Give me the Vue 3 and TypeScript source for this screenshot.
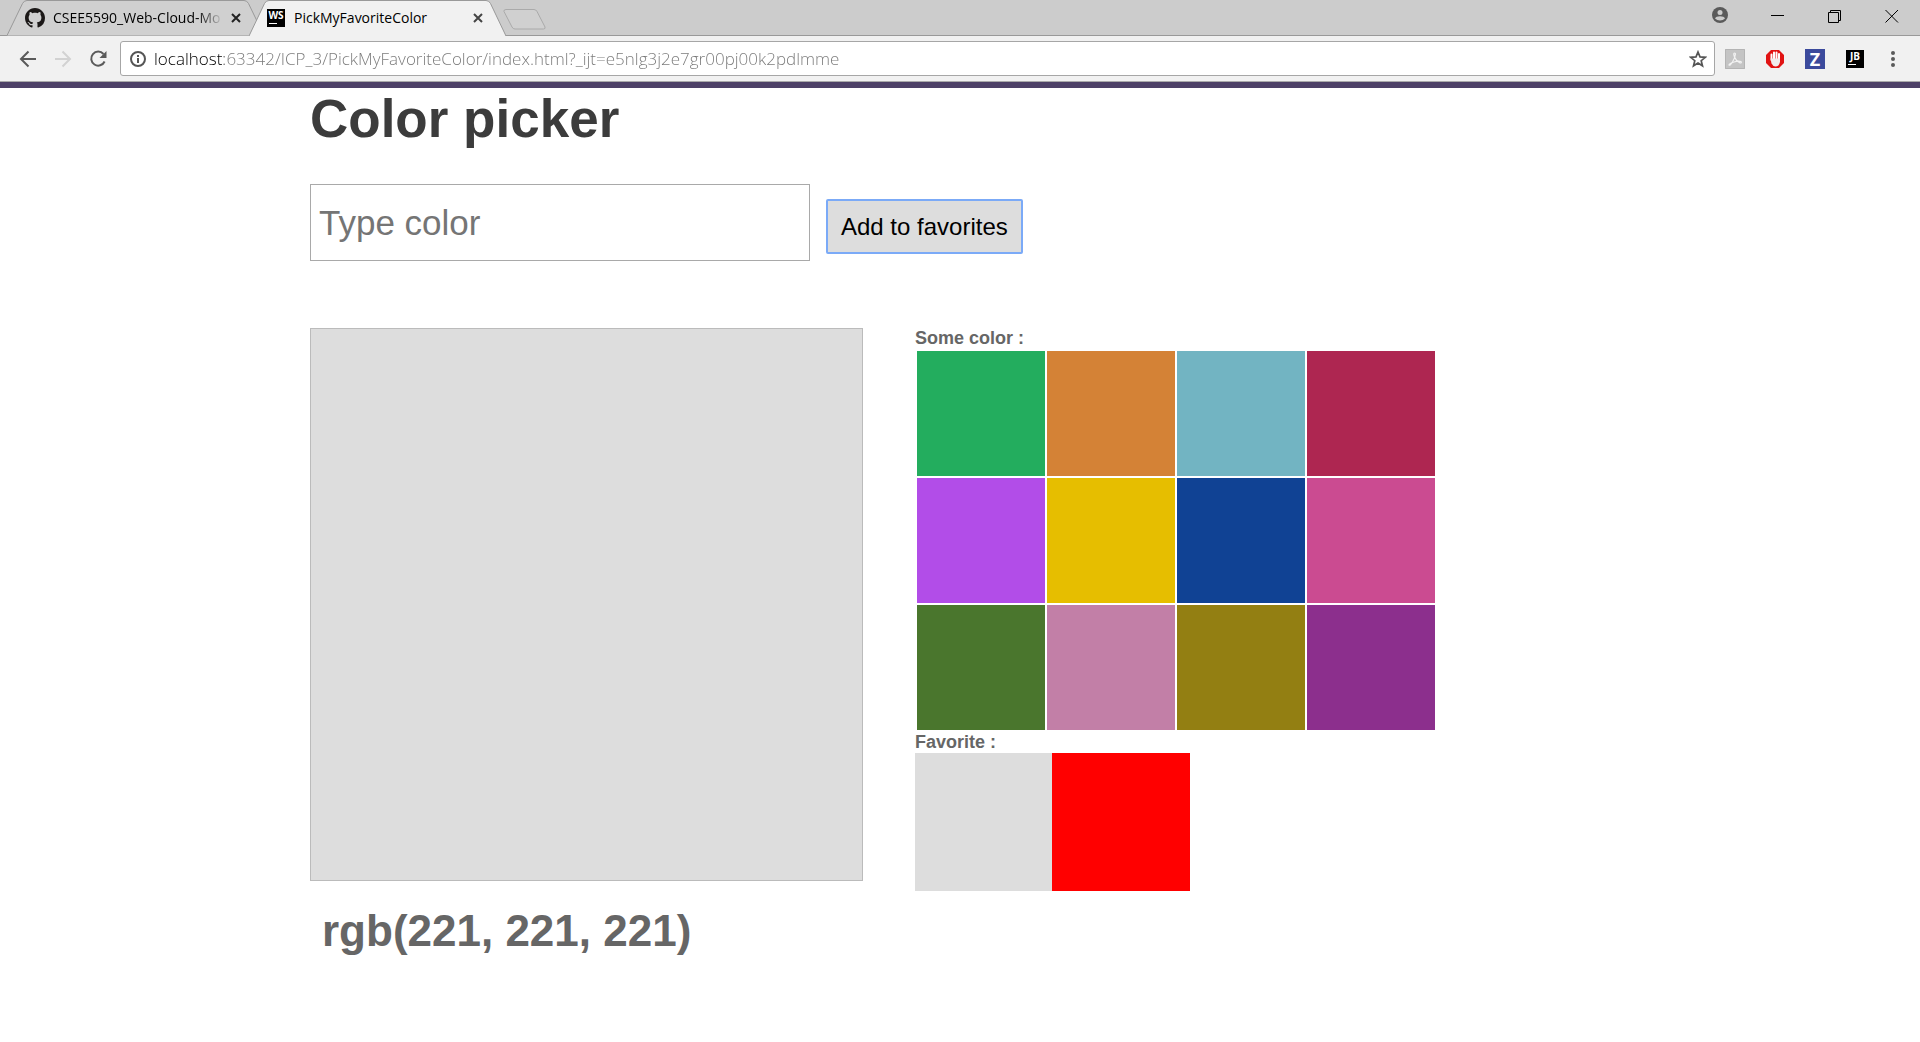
<script setup lang="ts">
import { computed, ref } from 'vue'

const palette: string[] = [
  '#23ad5e', '#d48236', '#72b4c2', '#ae2651',
  '#b24de8', '#e6be00', '#104294', '#cb4b91',
  '#4a762d', '#c27fa7', '#937f12', '#8c2f8d',
]

const address = ref('localhost:63342/ICP_3/PickMyFavoriteColor/index.html?_ijt=e5nlg3j2e7gr00pj00k2pdlmme')
const typed = ref('')
const current = ref('#dddddd')
const favorites = ref<string[]>(['#dddddd', '#ff0000'])

const rgbText = computed(() => {
  const hex = current.value.slice(1)
  const parts = [0, 2, 4].map((i) => parseInt(hex.slice(i, i + 2), 16))
  return `rgb(${parts.join(', ')})`
})

function applyTyped(): void {
  if (/^#[0-9a-f]{6}$/i.test(typed.value)) current.value = typed.value
}

function addFavorite(): void {
  favorites.value.unshift(current.value)
}
</script>

<template>
  <div class="window">
    <header class="browser">
      <div class="strip">
        <div class="tab tab-back">
          <svg class="shape" viewBox="0 0 258 36" aria-hidden="true">
            <path d="M0 35.500L15.500 3.500Q17 .500 20 .500H237Q240 .500 241.500 3.500L257 35.500" fill="#d0d0d0" stroke="#999" />
          </svg>
          <svg class="favicon" viewBox="0 0 16 16" aria-hidden="true">
            <path fill="#1b1817" d="M8 0C3.580 0 0 3.580 0 8c0 3.540 2.290 6.530 5.470 7.590.4.070.55-.17.55-.38 0-.19-.01-.82-.01-1.490-2.010.37-2.530-.49-2.690-.94-.09-.23-.48-.94-.82-1.130-.28-.15-.68-.52-.01-.53.63-.01 1.080.58 1.230.82.72 1.210 1.870.87 2.330.66.07-.52.28-.87.51-1.070-1.780-.2-3.640-.89-3.640-3.950 0-.87.31-1.590.82-2.150-.08-.2-.36-1.020.08-2.120 0 0 .67-.21 2.200.82.64-.18 1.320-.27 2-.27s1.360.09 2 .27c1.530-1.040 2.200-.82 2.200-.82.44 1.100.16 1.920.08 2.120.51.56.82 1.270.82 2.150 0 3.070-1.870 3.750-3.650 3.950.29.25.54.73.54 1.480 0 1.070-.01 1.930-.01 2.200 0 .21.15.46.55.38A8.010 8.010 0 0 0 16 8c0-4.420-3.580-8-8-8z" />
          </svg>
          <span class="tab-title faded">CSEE5590_Web-Cloud-Mo</span>
          <button class="tab-close" type="button" aria-label="Close tab">
            <svg viewBox="0 0 10 10"><path d="M1 1L9 9M9 1L1 9" stroke="#222" stroke-width="2" /></svg>
          </button>
        </div>
        <div class="tab tab-front">
          <svg class="shape" viewBox="0 0 258 36" aria-hidden="true">
            <path d="M0 36L15.500 3.500Q17 .500 20 .500H237Q240 .500 241.500 3.500L257 36" fill="#f1f1f1" stroke="#999" />
          </svg>
          <span class="favicon jet"><b>WS</b><i></i></span>
          <span class="tab-title">PickMyFavoriteColor</span>
          <button class="tab-close" type="button" aria-label="Close tab">
            <svg viewBox="0 0 10 10"><path d="M1 1L9 9M9 1L1 9" stroke="#444" stroke-width="2" /></svg>
          </button>
        </div>
        <button class="new-tab" type="button" aria-label="New tab">
          <svg width="44" height="21" viewBox="0 0 44 21">
            <path d="M3 .500H31Q33 .500 34 2.500L42 18Q42.500 20 40.500 20H12Q10 20 9 18L1 2.500Q.5 .500 3 .500Z" fill="#d0d0d0" stroke="#aaa" />
          </svg>
        </button>
        <div class="controls">
          <button type="button" aria-label="Profile">
            <svg width="18" height="18" viewBox="0 0 18 18">
              <circle cx="8" cy="8" r="8" fill="#5a5a5a" />
              <circle cx="8" cy="5.500" r="2.500" fill="#ccc" />
              <path d="M3 11.500Q4 9.300 8 9.300T13 11.500Q11 13.500 8 13.500T3 11.500Z" fill="#ccc" />
            </svg>
          </button>
          <button type="button" aria-label="Minimize">
            <svg width="14" height="14" viewBox="0 0 14 14"><path d="M0 6.500H13" stroke="#000" /></svg>
          </button>
          <button type="button" aria-label="Restore">
            <svg width="14" height="14" viewBox="0 0 14 14"><path d="M.5 3.500H10.500V13.500H.5ZM2.500 3.500V1.500H12.500V11.500H10.500" fill="none" stroke="#000" /></svg>
          </button>
          <button type="button" aria-label="Close">
            <svg width="14" height="14" viewBox="0 0 14 14"><path d="M.5 1L13 13.500M13 1L.5 13.500" stroke="#000" /></svg>
          </button>
        </div>
      </div>

      <div class="toolbar">
        <nav class="nav">
          <button type="button" aria-label="Back">
            <svg width="18" height="18" viewBox="0 0 18 18"><path d="M17 9H2M9.500 1.500L2 9L9.500 16.500" fill="none" stroke="#5a5a5a" stroke-width="2" /></svg>
          </button>
          <button type="button" aria-label="Forward">
            <svg width="18" height="18" viewBox="0 0 18 18"><path d="M1 9H16M8.500 1.500L16 9L8.500 16.500" fill="none" stroke="#d2d2d2" stroke-width="2" /></svg>
          </button>
          <button type="button" aria-label="Reload">
            <svg width="18" height="18" viewBox="0 0 18 18">
              <path d="M14.500 4A7 7 0 1 0 15.600 11.500" fill="none" stroke="#5a5a5a" stroke-width="2" />
              <path d="M17.500 1V8H10.500Z" fill="#5a5a5a" />
            </svg>
          </button>
        </nav>
        <div class="omnibox">
          <svg width="16" height="16" viewBox="0 0 16 16" aria-hidden="true">
            <circle cx="8" cy="8" r="7" fill="none" stroke="#555" stroke-width="2" />
            <path d="M8 7V12M8 4V6" stroke="#555" stroke-width="2" />
          </svg>
          <input v-model="address" class="url" type="text" aria-label="Address" spellcheck="false" />
          <button type="button" aria-label="Bookmark">
            <svg width="18" height="18" viewBox="0 0 18 18"><path d="M9 2L11 6.900L16.300 7.300L12.200 10.700L13.500 15.800L9 13L4.500 15.800L5.800 10.700L1.700 7.300L7 6.900Z" fill="none" stroke="#555" stroke-width="1.700" /></svg>
          </button>
        </div>
        <div class="extensions">
          <button type="button" aria-label="PDF tools">
            <svg width="20" height="20" viewBox="0 0 20 20">
              <path d="M0 0H20V20H0Z" fill="#c4c4c4" />
              <path d="M.5 .5H19.500V19.500H.5Z" fill="none" stroke="#b4b4b4" />
              <path d="M9.500 4Q8 4 9.500 8Q11 12 15 14Q17 14 16 12.500Q13 11.500 9 13Q4 14.500 4 16Q5 17 7.500 13Q10 8.500 10.500 5Q10.500 4 9.500 4" fill="none" stroke="#f2f2f2" stroke-width="1.200" />
            </svg>
          </button>
          <button type="button" aria-label="Ad blocker">
            <svg width="20" height="20" viewBox="0 0 20 20">
              <path d="M6 1H14L19 6V14L14 19H6L1 14V6Z" fill="#e11313" />
              <path d="M6.500 11V5.500M9 10V3.500M11.500 10V3.500M14 11V5" stroke="#fff" stroke-width="2" stroke-linecap="round" />
              <path d="M5.500 9.500H15V13Q14 17.500 10.500 17.500Q8 17.500 6.500 14.500Z" fill="#f1eeee" />
            </svg>
          </button>
          <button type="button" aria-label="Z extension"><span class="zed">Z</span></button>
          <button type="button" aria-label="JetBrains support"><span class="jet"><b>JB</b><i></i></span></button>
          <button class="menu" type="button" aria-label="Menu">
            <svg width="4" height="16" viewBox="0 0 4 16"><g fill="#5a5a5a"><circle cx="2" cy="2" r="2" /><circle cx="2" cy="8" r="2" /><circle cx="2" cy="14" r="2" /></g></svg>
          </button>
        </div>
      </div>
    </header>

    <main class="page">
      <div class="content">
        <h1>Color picker</h1>
        <form class="entry" @submit.prevent="addFavorite">
          <input v-model="typed" class="color-input" type="text" placeholder="Type color" aria-label="Color" @change="applyTyped" />
          <button class="add" type="submit">Add to favorites</button>
        </form>
        <div class="columns">
          <section class="current">
            <div class="preview" :style="{ backgroundColor: current }"></div>
            <h2>{{ rgbText }}</h2>
          </section>
          <section class="choices">
            <h3>Some color :</h3>
            <div class="palette">
              <button
                v-for="color in palette"
                :key="color"
                type="button"
                :aria-label="color"
                :style="{ backgroundColor: color }"
                @click="current = color"
              ></button>
            </div>
            <h3>Favorite :</h3>
            <div class="favorites">
              <div v-for="(color, i) in favorites" :key="i" :style="{ backgroundColor: color }"></div>
            </div>
          </section>
        </div>
      </div>
    </main>
  </div>
</template>

<style>
body {
  margin: 0;
  background: #fff;
}
</style>

<style scoped>
.window {
  font-family: "Liberation Sans", Arial, sans-serif;
  color: #666;
}
button {
  border: 0;
  padding: 0;
  background: none;
  font-family: inherit;
}
svg {
  display: block;
}

.browser {
  font-family: "Open Sans", "Noto Sans", sans-serif;
}
.strip {
  display: flex;
  height: 36px;
  background: #ccc;
  box-shadow: inset 0 -1px #999;
  padding-left: 7px;
}
.tab {
  position: relative;
  display: flex;
  align-items: center;
  width: 258px;
  height: 36px;
  padding: 0 24px 0 18px;
  box-sizing: border-box;
  color: #000;
}
.tab-front {
  margin-left: -16px;
}
.shape {
  position: absolute;
  inset: 0;
  width: 100%;
  height: 100%;
}
.favicon {
  position: relative;
  width: 20px;
  height: 20px;
  flex: none;
}
.tab-title {
  position: relative;
  flex: 1;
  margin: 0 8px;
  font-size: 14px;
  line-height: 20px;
  white-space: nowrap;
  overflow: hidden;
}
.faded {
  mask-image: linear-gradient(90deg, #000 85%, transparent);
}
.tab-close {
  position: relative;
  width: 10px;
  height: 10px;
}
.jet {
  display: flex;
  flex-direction: column;
  align-items: center;
  justify-content: space-between;
  width: 18px;
  height: 18px;
  padding: 1px 2px 3px;
  box-sizing: border-box;
  background: #000;
  color: #fff;
  font-size: 10px;
  line-height: 11px;
}
.jet i {
  align-self: flex-start;
  width: 8px;
  height: 1px;
  background: #fff;
}
.favicon.jet {
  width: 18px;
  height: 18px;
  margin-right: 1px;
}
.new-tab {
  margin: 9px 0 0 -4px;
  align-self: flex-start;
}
.controls {
  display: flex;
  margin-left: auto;
  height: 32px;
}
.controls button {
  display: flex;
  align-items: center;
  justify-content: center;
  width: 57px;
}

.toolbar {
  display: flex;
  align-items: center;
  height: 46px;
  box-sizing: border-box;
  background: #f1f1f1;
  border-bottom: 1px solid #aaa;
}
.nav {
  display: flex;
  gap: 17px;
  padding: 0 13px 0 19px;
}
.omnibox {
  display: flex;
  flex: 1;
  align-items: center;
  gap: 8px;
  height: 35px;
  box-sizing: border-box;
  padding: 0 7px 0 9px;
  border: 1px solid #a6a6a6;
  border-radius: 3px;
  background: #fff;
}
.url {
  flex: 1;
  border: 0;
  padding: 0;
  outline: 0;
  font-family: inherit;
  font-size: 17px;
  font-weight: 340;
  line-height: 24px;
  color: transparent;
  background: linear-gradient(90deg, #000 70px, #777 70px);
  background-clip: text;
}
.extensions {
  display: flex;
  align-items: center;
  padding: 0 9px 0 0;
}
.extensions button {
  display: flex;
  justify-content: center;
  width: 40px;
}
.extensions .menu {
  width: 36px;
}
.zed {
  width: 20px;
  height: 20px;
  background: #3b4a9c;
  color: #fff;
  font-size: 18px;
  font-weight: 700;
  line-height: 20px;
}

.page {
  border-top: 6px solid #4d4067;
}
.content {
  max-width: 1300px;
  margin: 0 auto;
}
h1,
h2,
h3 {
  margin: 0;
}
h1 {
  font-size: 53px;
  line-height: 62px;
  color: #3c3c3c;
}
.entry {
  display: flex;
  align-items: baseline;
  gap: 16px;
  margin: 34px 0 67px;
}
.color-input {
  width: 500px;
  height: 77px;
  box-sizing: border-box;
  padding: 0 8px;
  border: 1px solid #a9a9a9;
  font-family: inherit;
  font-size: 35px;
}
.color-input::placeholder {
  color: #757575;
}
.add {
  padding: 11px 13px;
  border: 2px solid #7baaf7;
  border-radius: 2px;
  background: #ddd;
  color: #000;
  font-size: 24px;
  line-height: 29px;
}
.columns {
  display: flex;
  gap: 52px;
}
.current {
  width: 553px;
}
.preview {
  aspect-ratio: 1;
  box-sizing: border-box;
  border: 1px solid #bbb;
}
h2 {
  padding: 25px 12px;
  font-size: 44px;
  line-height: 50px;
}
h3 {
  font-size: 18px;
  line-height: 21px;
}
.palette {
  display: grid;
  grid-template-columns: repeat(4, 128px);
  grid-auto-rows: 125px;
  gap: 2px;
  padding: 2px;
}
.favorites {
  display: grid;
  grid-template-columns: repeat(auto-fill, 137px);
}
.favorites div {
  width: 138px;
  height: 138px;
}
</style>
